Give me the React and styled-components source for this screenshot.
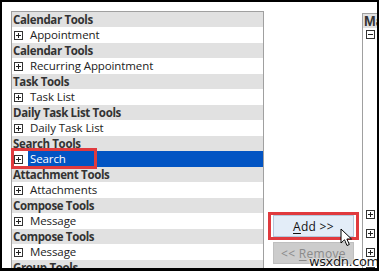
import React from "react";
import styled, { createGlobalStyle } from "styled-components";

const Global = createGlobalStyle`
  html, body { margin: 0; padding: 0; background: #fff; }
  body { font-family: "Open Sans", "Liberation Sans", sans-serif; }
`;

const Frame = styled.div`
  position: relative;
  width: 379px;
  height: 271px;
  box-sizing: border-box;
  border-style: solid;
  border-color: #000;
  border-width: 2px 2px 3px 2px;
  background: #fff;
  overflow: hidden;
  display: flex;
  align-items: flex-start;
  padding: 9px 0 0 9px;
`;

const LeftList = styled.div`
  flex: none;
  width: 253px;
  height: 300px;
  box-sizing: border-box;
  border: 1px solid #a0a0a0;
  border-bottom: none;
  display: flex;
  flex-direction: column;
`;

const Header = styled.div`
  height: 15px;
  line-height: 15px;
  background: #e1e1e1;
  padding-left: 1px;
  font-weight: 700;
  font-size: 11.5px;
  color: #333;
  white-space: nowrap;
  letter-spacing: -0.35px;
`;

const Item = styled.div`
  position: relative;
  height: 16px;
  display: flex;
  align-items: center;
  padding-left: 2px;
`;

const ItemText = styled.div`
  flex: 1;
  align-self: stretch;
  line-height: 16px;
  margin-left: 5px;
  padding-left: 2px;
  font-size: 11.5px;
  color: ${(p) => (p.$selected ? "#fff" : "#222")};
  background: ${(p) => (p.$selected ? "#0254c3" : "transparent")};
  white-space: nowrap;
  letter-spacing: -0.1px;
`;

const Highlight = styled.div`
  position: absolute;
  left: -1px;
  top: -3px;
  width: 86px;
  height: 21px;
  border: 3px solid #e03a3e;
  box-sizing: border-box;
  pointer-events: none;
`;

const Middle = styled.div`
  flex: none;
  width: 98px;
  display: flex;
  flex-direction: column;
  align-items: flex-start;
  padding-top: 201px;
`;

const RedBox = styled.div`
  margin-left: 4px;
  width: 91px;
  height: 28px;
  box-sizing: border-box;
  border: 3px solid #e03a3e;
  padding: 0 0 0 2px;
  display: flex;
  align-items: center;
`;

const Button = styled.div`
  width: 81px;
  height: 22px;
  box-sizing: border-box;
  display: flex;
  align-items: center;
  justify-content: center;
  font-size: 12px;
  border: 1px solid ${(p) => (p.$disabled ? "#bfbfbf" : "#b4c8dc")};
  background: ${(p) => (p.$disabled ? "#cccccc" : "#e3edf8")};
  color: ${(p) => (p.$disabled ? "#8a8a8a" : "#111")};
  letter-spacing: 0.3px;
  margin-left: ${(p) => p.$ml || 0}px;
  margin-top: ${(p) => p.$mt || 0}px;
  white-space: pre;
  u { text-decoration: underline; text-underline-offset: 2px; }
`;

const RightList = styled.div`
  flex: 1;
  margin-top: 2px;
  height: 300px;
  border-left: 1px solid #a0a0a0;
  border-top: 1px solid #a0a0a0;
  display: flex;
  flex-direction: column;
`;

const RightHeader = styled.div`
  height: 14px;
  line-height: 15px;
  background: #e1e1e1;
  font-family: "Liberation Sans", Arial, sans-serif;
  font-weight: 700;
  font-size: 14px;
  color: #333;
  padding-left: 1px;
  overflow: hidden;
  white-space: nowrap;
`;

const RightRow = styled.div`
  height: ${(p) => p.$h || 19}px;
  padding-left: 3px;
  padding-top: ${(p) => p.$pt || 0}px;
  box-sizing: border-box;
  margin-top: ${(p) => p.$mt || 0}px;
  display: flex;
  align-items: flex-start;
`;

const Watermark = styled.div`
  position: absolute;
  left: 307px;
  top: 252px;
  font-family: "DejaVu Sans", "Liberation Sans", sans-serif;
  font-size: 13px;
  letter-spacing: -0.4px;
  color: #1a1a1a;
  text-shadow: 0 0 2px #fff, 0 0 2px #fff;
`;

const Cursor = styled.svg`
  position: absolute;
  left: 338px;
  top: 226px;
`;

const BoxIcon = ({ minus }) => (
  <svg width="9" height="9" viewBox="0 0 9 9" style={{ display: "block", flex: "none" }}>
    <rect x="0.5" y="0.5" width="8" height="8" fill="#fff" stroke="#333" />
    <line x1="2" y1="4.5" x2="7" y2="4.5" stroke="#222" />
    {!minus && <line x1="4.5" y1="2" x2="4.5" y2="7" stroke="#222" />}
  </svg>
);

const rows = [
  ["Calendar Tools", "Appointment"],
  ["Calendar Tools", "Recurring Appointment"],
  ["Task Tools", "Task List"],
  ["Daily Task List Tools", "Daily Task List"],
  ["Search Tools", "Search", true],
  ["Attachment Tools", "Attachments"],
  ["Compose Tools", "Message"],
  ["Compose Tools", "Message"],
  ["Group Tools", "Group"],
];

export default function App() {
  return (
    <>
      <Global />
      <Frame>
        <LeftList>
          {rows.map(([h, it, sel], i) => (
            <React.Fragment key={i}>
              <Header>{h}</Header>
              <Item>
                <BoxIcon />
                <ItemText $selected={sel}>{it}</ItemText>
                {sel && <Highlight />}
              </Item>
            </React.Fragment>
          ))}
        </LeftList>
        <Middle>
          <RedBox>
            <Button>
              <span>
                <u>A</u>dd &gt;&gt;
              </span>
            </Button>
          </RedBox>
          <Button $disabled $ml={9} $mt={2}>
            <span>
              &lt;&lt; <u>R</u>emove
            </span>
          </Button>
        </Middle>
        <RightList>
          <RightHeader>Ma</RightHeader>
          <RightRow $h={16} $pt={2}>
            <BoxIcon minus />
          </RightRow>
          <RightRow $mt={166}>
            <BoxIcon />
          </RightRow>
          <RightRow>
            <BoxIcon />
          </RightRow>
          <RightRow>
            <BoxIcon />
          </RightRow>
          <RightRow>
            <BoxIcon />
          </RightRow>
        </RightList>
        <Cursor width="13" height="20" viewBox="0 0 13 20">
          <path
            d="M1 1 L1 15 L4.5 11.8 L7 17.5 L9.3 16.5 L6.9 11 L11.5 11 Z"
            fill="#fff"
            stroke="#000"
            strokeWidth="1"
            strokeLinejoin="round"
          />
        </Cursor>
        <Watermark>wsxdn.com</Watermark>
      </Frame>
    </>
  );
}
